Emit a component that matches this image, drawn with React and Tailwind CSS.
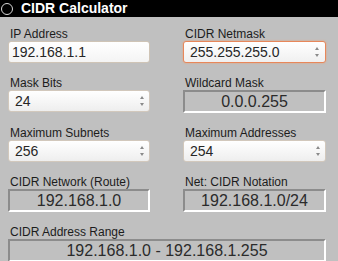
import React from "react";

const font = { fontFamily: '"Liberation Sans", Arial, sans-serif' };

function Spinner() {
  return (
    <div className="flex flex-col items-center gap-[4px]">
      <div className="w-0 h-0 border-l-[2.5px] border-r-[2.5px] border-b-[3px] border-l-transparent border-r-transparent border-b-[#8a8a8a]" />
      <div className="w-0 h-0 border-l-[2.5px] border-r-[2.5px] border-t-[3px] border-l-transparent border-r-transparent border-t-[#8a8a8a]" />
    </div>
  );
}

function Label({ children }) {
  return <div className="h-[15px] pl-[2px] text-[12px] leading-[16px] text-[#1c1c1c]">{children}</div>;
}

function TextBox({ value }) {
  return (
    <div className="h-[22px] rounded-[3px] border border-[#cfc4b6] bg-gradient-to-b from-white to-[#f4f4f4] pl-[3px] flex items-center text-[14px] text-[#262626]">
      {value}
    </div>
  );
}

function SelectBox({ value, focused }) {
  return (
    <div
      className={
        focused
          ? "h-[22px] rounded-[3px] border-[1.5px] border-[#e8875a] shadow-[0_0_2px_#f0a070] bg-gradient-to-b from-white to-[#f0f0f0] pl-[6px] pr-[6px] flex items-center justify-between text-[14px] text-[#262626]"
          : "h-[22px] rounded-[3px] border border-[#d2c8bc] bg-gradient-to-b from-white to-[#eeeeee] pl-[6px] pr-[5px] flex items-center justify-between text-[14px] text-[#262626]"
      }
    >
      <span>{value}</span>
      <Spinner />
    </div>
  );
}

function ReadBox({ value }) {
  return (
    <div className="h-[23px] border-2 border-t-[#8c8c8c] border-l-[#8c8c8c] border-b-white border-r-white flex items-center justify-center text-[16px] text-[#2b2b2b]">
      {value}
    </div>
  );
}

function Field({ label, children }) {
  return (
    <div className="flex flex-col">
      <Label>{label}</Label>
      {children}
    </div>
  );
}

export default function App() {
  return (
    <div className="w-[338px] h-[261px] bg-[#c0c0c0] overflow-hidden" style={font}>
      <div className="h-[17px] bg-black flex items-center pl-[1px]">
        <div className="w-[12px] h-[12px] rounded-full border border-[#d8d8d8] bg-black" />
        <div className="ml-[8px] text-white font-bold text-[14px] leading-[17px]">CIDR Calculator</div>
      </div>
      <div className="pl-[8px] pr-[12px] pt-[9px] grid grid-cols-[142px_143px] gap-x-[33px] gap-y-[12px]">
        <Field label="IP Address"><TextBox value="192.168.1.1" /></Field>
        <Field label="CIDR Netmask"><SelectBox value="255.255.255.0" focused /></Field>
        <Field label="Mask Bits"><SelectBox value="24" /></Field>
        <Field label="Wildcard Mask"><ReadBox value="0.0.0.255" /></Field>
        <Field label="Maximum Subnets"><SelectBox value="256" /></Field>
        <Field label="Maximum Addresses"><SelectBox value="254" /></Field>
        <Field label="CIDR Network (Route)"><ReadBox value="192.168.1.0" /></Field>
        <Field label="Net: CIDR Notation"><ReadBox value="192.168.1.0/24" /></Field>
        <div className="col-span-2">
          <Field label="CIDR Address Range"><ReadBox value="192.168.1.0 - 192.168.1.255" /></Field>
        </div>
      </div>
    </div>
  );
}
